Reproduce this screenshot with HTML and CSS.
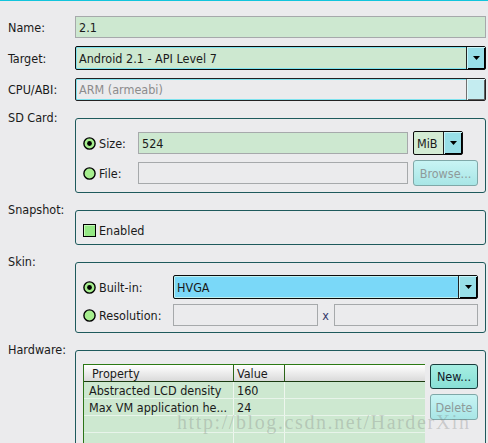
FILE: index.html
```html
<!DOCTYPE html>
<html>
<head>
<meta charset="utf-8">
<link rel="stylesheet" href="styles.css">
</head>
<body>
<div class="topline"></div>
<div class="form">
  <div class="row">
    <div class="lbl">Name:</div>
    <div class="input green">2.1</div>
  </div>
  <div class="row r-gap">
    <div class="lbl">Target:</div>
    <div class="combo c-target">
      <span class="combo-text">Android 2.1 - API Level 7</span>
      <span class="combo-btn"><svg width="7" height="4" viewBox="0 0 7 4"><polygon points="0,0 7,0 3.5,4" fill="#000"/></svg></span>
    </div>
  </div>
  <div class="row r-gap">
    <div class="lbl">CPU/ABI:</div>
    <div class="combo c-cpu">
      <span class="combo-text dis">ARM (armeabi)</span>
      <span class="combo-btn"></span>
    </div>
  </div>

  <div class="row grow">
    <div class="lbl">SD Card:</div>
    <div class="group g-sd">
      <div class="opt">
        <svg class="radio" width="13" height="13" viewBox="0 0 13 13"><circle cx="6.5" cy="6.5" r="5.6" fill="#a6ee8e" stroke="#000" stroke-width="1.4"/><circle cx="6.5" cy="6.5" r="2.4" fill="#000"/></svg>
        <span>Size:</span>
      </div>
      <div class="input green mr">524</div>
      <div class="combo c-mib">
        <span class="combo-text">MiB</span>
        <span class="combo-btn"><svg width="7" height="4" viewBox="0 0 7 4"><polygon points="0,0 7,0 3.5,4" fill="#000"/></svg></span>
      </div>
      <div class="opt">
        <svg class="radio" width="13" height="13" viewBox="0 0 13 13"><circle cx="6.5" cy="6.5" r="5.6" fill="#a6ee8e" stroke="#000" stroke-width="1.4"/></svg>
        <span>File:</span>
      </div>
      <div class="input mr"></div>
      <div class="btn dis-btn">Browse...</div>
    </div>
  </div>

  <div class="row grow">
    <div class="lbl">Snapshot:</div>
    <div class="group g-snap">
      <div class="opt">
        <span class="check"></span>
        <span>Enabled</span>
      </div>
    </div>
  </div>

  <div class="row grow">
    <div class="lbl">Skin:</div>
    <div class="group g-skin">
      <div class="opt">
        <svg class="radio" width="13" height="13" viewBox="0 0 13 13"><circle cx="6.5" cy="6.5" r="5.6" fill="#a6ee8e" stroke="#000" stroke-width="1.4"/><circle cx="6.5" cy="6.5" r="2.4" fill="#000"/></svg>
        <span>Built-in:</span>
      </div>
      <div class="combo c-hvga">
        <span class="combo-text">HVGA</span>
        <span class="combo-btn"><svg width="7" height="4" viewBox="0 0 7 4"><polygon points="0,0 7,0 3.5,4" fill="#000"/></svg></span>
      </div>
      <div class="opt">
        <svg class="radio" width="13" height="13" viewBox="0 0 13 13"><circle cx="6.5" cy="6.5" r="5.6" fill="#a6ee8e" stroke="#000" stroke-width="1.4"/></svg>
        <span>Resolution:</span>
      </div>
      <div class="res">
        <div class="input"></div>
        <span class="x">x</span>
        <div class="input"></div>
      </div>
    </div>
  </div>

  <div class="row grow">
    <div class="lbl">Hardware:</div>
    <div class="group g-hw">
      <div class="tbl">
        <div class="thead">
          <div class="th th-prop">Property</div>
          <div class="th th-val">Value</div>
          <div class="th th-rest"></div>
        </div>
        <div class="trow"><div class="td td-prop">Abstracted LCD density</div><div class="td td-val">160</div><div class="td"></div></div>
        <div class="trow"><div class="td td-prop">Max VM application he...</div><div class="td td-val">24</div><div class="td"></div></div>
        <div class="trow"><div class="td td-prop"></div><div class="td td-val"></div><div class="td"></div></div>
        <div class="trow"><div class="td td-prop"></div><div class="td td-val"></div><div class="td"></div></div>
      </div>
      <div class="side">
        <div class="btn new-btn">New...</div>
        <div class="btn dis-btn del">Delete</div>
      </div>
    </div>
  </div>
</div>
<div class="watermark">http://blog.csdn.net/HarderXin</div>
</body>
</html>
```

FILE: styles.css
```css
* { box-sizing: border-box; }
html, body { margin: 0; padding: 0; }
body {
  background: #ebebed;
  font-family: "DejaVu Sans Condensed", "DejaVu Sans", sans-serif;
  font-size: 12.5px;
  color: #1a1a1a;
  width: 488px;
  height: 443px;
  overflow: hidden;
  position: relative;
}
.topline { height: 1px; background: #12c4dc; }
.form {
  padding: 15px 2px 0 8px;
  display: flex;
  flex-direction: column;
}
.row {
  display: grid;
  grid-template-columns: 67px 1fr;
  align-items: center;
}
.r-gap { margin-top: 8px; }
.grow { align-items: start; margin-top: 17px; }
.grow > .lbl { margin-top: -7px; line-height: 14px; }
.lbl { white-space: nowrap; }

.input {
  height: 22px;
  border: 1px solid #a6a9ab;
  padding-left: 3px;
  display: flex;
  align-items: center;
  background: #ebebed;
}
.input.green { background: #cde8d0; }
.mr { margin-right: 5px; }

.combo {
  display: flex;
  border: 1px solid #0c0c0c;
  border-radius: 2px;
  box-shadow: inset 0 0 0 1px #7fe2ee;
  background: #cde8d0;
}
.combo-text {
  flex: 1;
  display: flex;
  align-items: center;
  padding-left: 3px;
  white-space: nowrap;
}
.combo-text.dis { color: #8c8c8c; }
.combo-btn {
  width: 19px;
  display: flex;
  align-items: center;
  justify-content: center;
  background: #98dfe8;
  border-left: 1px solid #222;
  box-shadow: inset 1px 1px 0 #c8f4f8, inset -1px -1px 0 #000;
}
.c-target { height: 24px; }
.c-cpu { height: 23px; background: #ebebed; border-color: #222; }
.c-cpu .combo-btn { background: #c4ecf0; border-left-color: #707070; box-shadow: inset 1px 1px 0 #e0f8fa, inset -1px -1px 0 #606060; }
.c-mib { height: 24px; width: 50px; background: #d4ecd4; box-shadow: none; }
.c-hvga { height: 24px; background: #7ad8f8; box-shadow: inset 0 0 0 1px #c0f0f0; }

.group {
  border: 1px solid #1e5a5c;
  border-radius: 3px;
  padding: 12px 7px 6px 7px;
}
.g-sd {
  display: grid;
  grid-template-columns: 55px 1fr 65px;
  grid-template-rows: 24px 26px;
  row-gap: 5px;
  align-items: center;
}
.g-snap { padding: 12px 7px 6px 7px; height: 35px; }
.g-snap .opt { height: 15px; }
.g-skin {
  display: grid;
  grid-template-columns: 90px 1fr;
  grid-template-rows: 24px 22px;
  row-gap: 5px;
  align-items: center;
}
.g-hw {
  display: flex;
  gap: 5px;
  padding: 13px 7px 0 7px;
  height: 130px;
}

.opt { display: flex; align-items: center; white-space: nowrap; }
.radio { flex: none; margin-right: 3px; display: block; }
.check {
  width: 13px; height: 13px;
  border: 1px solid #000;
  background: #94e884;
  box-shadow: inset 1px 1px 0 #c4f8b8;
  margin-right: 3px;
  flex: none;
}

.res {
  display: grid;
  grid-template-columns: 1fr 16px 1fr;
  align-items: center;
}
.x { text-align: center; color: #34386a; }

.btn {
  height: 26px;
  border-radius: 3px;
  display: flex;
  align-items: center;
  justify-content: center;
  white-space: nowrap;
}
.dis-btn {
  border: 1px solid #7fa8a8;
  background: linear-gradient(#c8f4f4, #a8e6e6);
  color: #8e9a9a;
}
.new-btn {
  height: 25px;
  border: 1px solid #183c3c;
  background: linear-gradient(#a6eee2, #88e0d6);
  color: #101828;
}
.side { width: 48px; display: flex; flex-direction: column; gap: 5px; }
.del { height: 26px; }

.tbl {
  flex: 1;
  border-left: 1px solid #2c7418;
  background: #cde8d0;
}
.thead {
  display: grid;
  grid-template-columns: 150px 51px 1fr;
  height: 18px;
  border-top: 1px solid #2c7a14;
  border-bottom: 1px solid #1a3a10;
  background: linear-gradient(#ffffff, #dadada);
}
.th { display: flex; align-items: center; }
.th-prop { padding-left: 8px; border-right: 1px solid #2c6418; }
.th-val { padding-left: 3px; border-right: 1px solid #2c6418; }
.trow {
  display: grid;
  grid-template-columns: 150px 51px 1fr;
  height: 17px;
  border-bottom: 1px solid #e8f4ea;
}
.td { display: flex; align-items: center; white-space: nowrap; overflow: hidden; }
.td-prop { padding-left: 5px; border-right: 1px solid #eef6ee; }
.td-val { padding-left: 3px; border-right: 1px solid #eef6ee; }

.watermark {
  position: absolute;
  left: 177px;
  top: 411px;
  font-family: "Liberation Serif", serif;
  font-size: 20px;
  letter-spacing: 1.6px;
  color: rgba(120, 120, 120, 0.3);
  white-space: nowrap;
  pointer-events: none;
}
```
